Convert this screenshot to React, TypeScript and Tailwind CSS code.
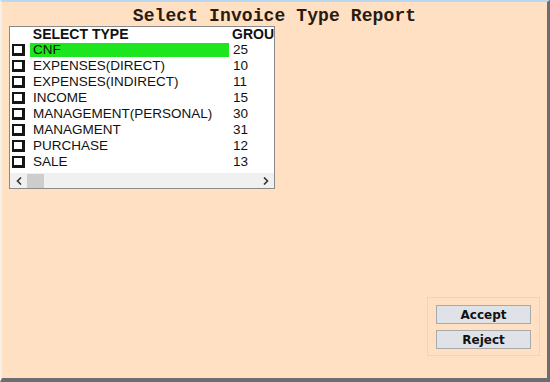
import { useState } from 'react'

const types = [
  { name: 'CNF', group: 25 },
  { name: 'EXPENSES(DIRECT)', group: 10 },
  { name: 'EXPENSES(INDIRECT)', group: 11 },
  { name: 'INCOME', group: 15 },
  { name: 'MANAGEMENT(PERSONAL)', group: 30 },
  { name: 'MANAGMENT', group: 31 },
  { name: 'PURCHASE', group: 12 },
  { name: 'SALE', group: 13 },
]

function CheckBox() {
  return (
    <span className="block w-[13px] h-[12px] bg-white border-2 border-[#151515] border-r-[3px] border-b-[3px] box-border" />
  )
}

export default function App() {
  const [selected, setSelected] = useState(0)

  return (
    <div className="w-[550px] h-[382px] bg-[#ffe0c2] border-t-2 border-t-[#b9d7ee] border-l-2 border-l-[#f3efe9] border-r-[3px] border-r-[#6d6d6d] border-b-[4px] border-b-[#6d6d6d] box-border flex flex-col font-['Liberation_Sans',Arial,sans-serif]">
      <h1 className="h-[24px] pt-[5px] text-center font-['Liberation_Mono',monospace] font-bold text-[18px] leading-[18px] tracking-[0.1px] text-[#2a1a10]">
        Select Invoice Type Report
      </h1>

      <div className="flex-1 flex flex-col px-[7px]">
        <div className="w-[266px] h-[163px] bg-white border border-[#8a8a8a] flex flex-col">
          <div className="flex h-[14px] items-center text-[14px] font-bold text-[#111] leading-none">
            <span className="w-[23px]" />
            <span className="w-[200px]">SELECT TYPE</span>
            <span className="pl-[1px]">GROU</span>
          </div>
          <div className="flex-1 pt-[1px]">
            {types.map((t, i) => (
              <div
                key={t.name}
                onClick={() => setSelected(i)}
                className="flex h-[16px] items-center text-[13.5px] leading-none text-[#111] cursor-default"
              >
                <span className="w-[20px] pl-[2px]">
                  <CheckBox />
                </span>
                <span
                  className={
                    selected === i
                      ? 'w-[199px] h-[14px] flex items-center pl-[3px] bg-[#1ee61e]'
                      : 'w-[199px] h-[14px] flex items-center pl-[3px]'
                  }
                >
                  {t.name}
                </span>
                <span className="pl-[4px]">{t.group}</span>
              </div>
            ))}
          </div>
          <div className="h-[15px] flex items-center bg-[#f0f0f0] text-[#333]">
            <span className="w-[17px] flex items-center justify-center">
              <svg width="6" height="8" viewBox="0 0 6 8">
                <path d="M5 0.5 L1.5 4 L5 7.5" fill="none" stroke="#333" strokeWidth="1.6" />
              </svg>
            </span>
            <span className="w-[17px] h-[14px] bg-[#cdcdcd]" />
            <span className="flex-1" />
            <span className="w-[17px] flex items-center justify-center">
              <svg width="6" height="8" viewBox="0 0 6 8">
                <path d="M1 0.5 L4.5 4 L1 7.5" fill="none" stroke="#333" strokeWidth="1.6" />
              </svg>
            </span>
          </div>
        </div>

        <div className="flex-1 flex justify-end items-end pb-[22px]">
          <div className="w-[113px] h-[59px] border border-[#f5d2b0] flex flex-col items-center gap-[6px] pt-[7px]">
            <button className="w-[95px] h-[19px] bg-[#dfe3e8] border border-[#a9a9a9] text-[12px] font-bold text-[#111] leading-none font-['DejaVu_Sans',Tahoma,sans-serif]">
              Accept
            </button>
            <button className="w-[95px] h-[19px] bg-[#dfe3e8] border border-[#a9a9a9] text-[12px] font-bold text-[#111] leading-none font-['DejaVu_Sans',Tahoma,sans-serif]">
              Reject
            </button>
          </div>
        </div>
      </div>
    </div>
  )
}
